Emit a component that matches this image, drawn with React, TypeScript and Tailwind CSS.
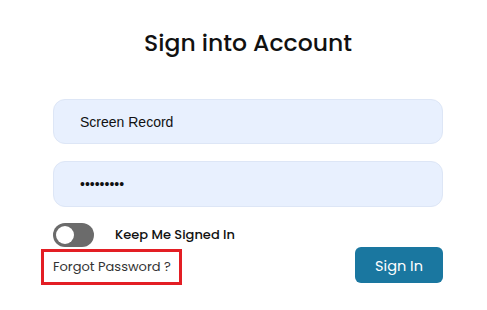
export default function App() {
  const font = { fontFamily: 'Poppins, Inter, "Noto Sans", sans-serif' };
  return (
    <div className="w-[487px] h-[310px] bg-white overflow-hidden" style={font}>
      <div className="ml-[53px] w-[390px] flex flex-col">
        <h1 className="mt-[27px] h-[32px] text-center text-[23.5px] font-medium leading-[32px] text-[#111]">
          Sign into Account
        </h1>

        <div className="mt-[40px] h-[45px] rounded-[12px] bg-[#e8f0fe] border border-[#dde6f6] flex items-center pl-[26px] pt-[2px]">
          <span className="text-[14px] text-[#111]" style={{ fontFamily: '"Liberation Sans", Arial, sans-serif' }}>
            Screen Record
          </span>
        </div>

        <div className="mt-[17px] h-[46px] rounded-[12px] bg-[#e8f0fe] border border-[#dde6f6] flex items-center pl-[26px]">
          <span className="text-[14px] text-[#111]" style={{ fontFamily: '"Liberation Sans", Arial, sans-serif' }}>
            •••••••••
          </span>
        </div>

        <div className="mt-[16px] h-[24px] flex items-center">
          <div className="w-[41px] h-[24px] rounded-full bg-[#6b6b6b] flex items-center pl-[3px]">
            <div className="w-[18px] h-[18px] rounded-full bg-white" />
          </div>
          <span className="ml-[21px] text-[13px] font-medium text-[#111]">Keep Me Signed In</span>
        </div>

        <div className="flex items-start justify-between">
          <div className="-ml-[12px] mt-[2px] w-[141px] h-[36px] border-[3px] border-[#e31e24] flex items-center pl-[9px]">
            <span className="text-[13px] whitespace-nowrap text-[#333]">Forgot Password ?</span>
          </div>
          <button className="w-[88px] h-[36px] rounded-[6px] bg-[#1a77a0] text-white text-[14.5px] pt-[3px]">
            Sign In
          </button>
        </div>
      </div>
    </div>
  );
}
